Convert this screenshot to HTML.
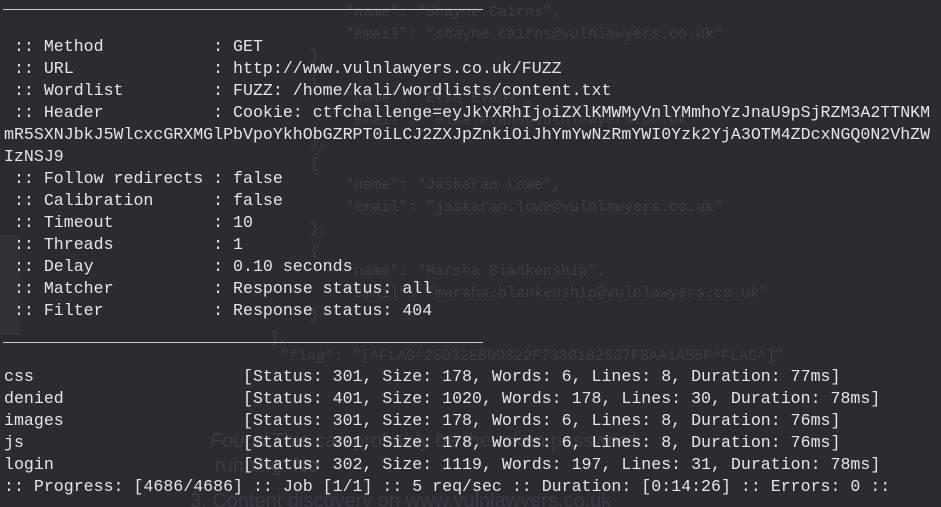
<!DOCTYPE html>
<html><head><meta charset="utf-8"><style>
html,body{margin:0;padding:0;background:#2a2c32;width:941px;height:507px;overflow:hidden;position:relative}
.g{position:absolute;font-family:"Liberation Mono",monospace;font-size:15px;color:#3a3d44;white-space:pre}
.gs{position:absolute;font-family:"Liberation Sans",sans-serif;font-size:20px;color:#383b42;white-space:pre}
#t{position:absolute;left:4px;top:36px;font-family:"Liberation Mono",monospace;font-size:16.6px;line-height:22px;color:#e4e6ea;white-space:pre}
.sep{position:absolute;left:3px;width:480px;height:1px;background:#c8c8c8}
</style></head><body>
<div class="g" style="left:345px;top:4px">"name": "Shayne Cairns",</div>
<div class="g" style="left:345px;top:26px">"email": "shayne.cairns@vulnlawyers.co.uk"</div>
<div class="g" style="left:310px;top:48px">},</div>
<div class="g" style="left:310px;top:70px">{</div>
<div class="g" style="left:345px;top:90px">"name": "Elsa Evans",</div>
<div class="g" style="left:345px;top:112px">"email": "elsa.evans@vulnlawyers.co.uk"</div>
<div class="g" style="left:310px;top:134px">},</div>
<div class="g" style="left:310px;top:156px">{</div>
<div class="g" style="left:345px;top:177px">"name": "Jaskaran Lowe",</div>
<div class="g" style="left:345px;top:199px">"email": "jaskaran.lowe@vulnlawyers.co.uk"</div>
<div class="g" style="left:310px;top:221px">},</div>
<div class="g" style="left:310px;top:243px">{</div>
<div class="g" style="left:345px;top:263px">"name": "Marsha Blankenship",</div>
<div class="g" style="left:345px;top:285px">"email": "marsha.blankenship@vulnlawyers.co.uk"</div>
<div class="g" style="left:310px;top:307px">}</div>
<div class="g" style="left:270px;top:330px">],</div>
<div class="g" style="left:280px;top:348px">"flag": "[^FLAG^25032EB0D322F7330182507FBAA1A55F^FLAG^]"</div>
<div class="gs" style="left:210px;top:430px"><i>Found</i> This can probably be the token password</div>
<div class="gs" style="left:215px;top:455px">running: <b>No</b></div>
<div class="gs" style="left:190px;top:490px">3. Content discovery on www.vulnlawyers.co.uk</div>
<div style="position:absolute;left:0;top:235px;width:20px;height:100px;background:#303238"></div>
<div class="sep" style="top:9px"></div>
<div class="sep" style="top:342px"></div>
<div id="t"> :: Method           : GET
 :: URL              : http://www.vulnlawyers.co.uk/FUZZ
 :: Wordlist         : FUZZ: /home/kali/wordlists/content.txt
 :: Header           : Cookie: ctfchallenge=eyJkYXRhIjoiZXlKMWMyVnlYMmhoYzJnaU9pSjRZM3A2TTNKM
mR5SXNJbkJ5WlcxcGRXMGlPbVpoYkhObGZRPT0iLCJ2ZXJpZnkiOiJhYmYwNzRmYWI0Yzk2YjA3OTM4ZDcxNGQ0N2VhZW
IzNSJ9
 :: Follow redirects : false
 :: Calibration      : false
 :: Timeout          : 10
 :: Threads          : 1
 :: Delay            : 0.10 seconds
 :: Matcher          : Response status: all
 :: Filter           : Response status: 404


css                     [Status: 301, Size: 178, Words: 6, Lines: 8, Duration: 77ms]
denied                  [Status: 401, Size: 1020, Words: 178, Lines: 30, Duration: 78ms]
images                  [Status: 301, Size: 178, Words: 6, Lines: 8, Duration: 76ms]
js                      [Status: 301, Size: 178, Words: 6, Lines: 8, Duration: 76ms]
login                   [Status: 302, Size: 1119, Words: 197, Lines: 31, Duration: 78ms]
:: Progress: [4686/4686] :: Job [1/1] :: 5 req/sec :: Duration: [0:14:26] :: Errors: 0 ::</div>
</body></html>
